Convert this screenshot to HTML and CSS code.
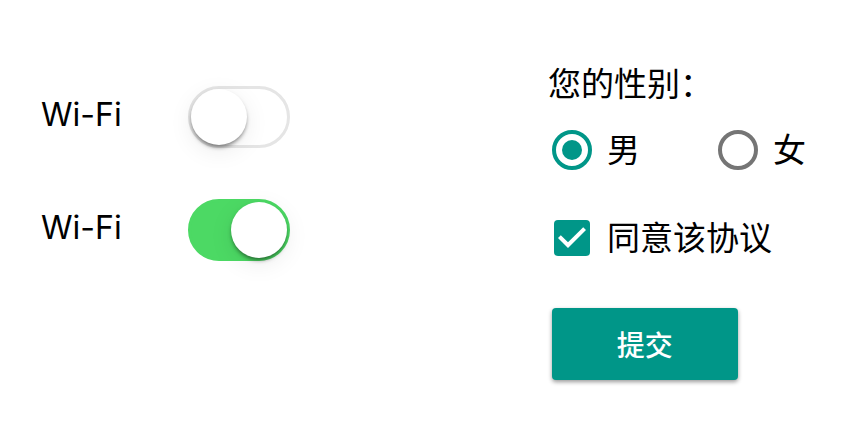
FILE: index.html
```
<!doctype html>
<html lang="zh-CN">
<head>
<meta charset="UTF-8">
<title>Form controls</title>
<meta name="viewport" content="width=device-width, initial-scale=1.0">
<link rel="stylesheet" href="styles.css">
</head>
<body>
<main class="demo">
  <section class="switches">
    <label class="switch-row">
      <span class="switch-text">Wi-Fi</span>
      <input class="switch" type="checkbox" role="switch">
    </label>
    <label class="switch-row">
      <span class="switch-text">Wi-Fi</span>
      <input class="switch" type="checkbox" role="switch" checked>
    </label>
  </section>

  <form class="form">
    <fieldset class="group">
      <legend class="title">您的性别：</legend>
      <div class="options">
        <label class="option">
          <input class="radio" type="radio" name="gender" value="male" checked>
          <span class="option-text">男</span>
        </label>
        <label class="option">
          <input class="radio" type="radio" name="gender" value="female">
          <span class="option-text">女</span>
        </label>
      </div>
    </fieldset>
    <div class="agree">
      <input class="checkbox" type="checkbox" id="agree" checked>
      <label class="option-text" for="agree">同意该协议</label>
    </div>
    <button class="submit" type="button">提交</button>
  </form>
</main>
</body>
</html>
```
FILE: styles.css
```
* { box-sizing: border-box; }
body { margin: 0; background: #fff; color: #000; font-family: "Noto Sans CJK SC", sans-serif; font-size: 33px; line-height: 36px; }
input { appearance: none; flex: none; margin: 0; cursor: pointer; }

.demo { display: grid; grid-template-columns: 5fr 3fr; padding: 64px 0 32px 41px; }

/* iOS switch */
.switches { display: flex; flex-direction: column; align-items: flex-start; gap: 51px; padding-top: 22px; }
.switch-row { display: flex; align-items: center; height: 62px; cursor: pointer; }
.switch-text { width: 147px; padding-bottom: 4px; font-family: Inter, sans-serif; font-size: 32px; }
.switch { display: flex; width: 102px; height: 62px; padding: 0; border: 3px solid #e5e5e5; border-radius: 31px; background: #fff; }
.switch::before { content: ""; width: 56px; height: 56px; border-radius: 50%; background: #fff; box-shadow: 0 3px 4px -1px rgba(0, 0, 0, 0.5), 0 6px 24px rgba(0, 0, 0, 0.08); }
.switch:checked { justify-content: flex-end; border-color: #4cd964; background: #4cd964; }

/* material form */
.form { display: flex; flex-direction: column; align-items: flex-start; }
.group { margin: 0; padding: 0; border: 0; }
.title { padding: 0; }
.options { display: flex; gap: 78px; padding: 30px 0 0 4px; }
.option { display: flex; align-items: center; gap: 15px; cursor: pointer; }
.option-text { padding-bottom: 4px; }
.radio { display: grid; place-items: center; width: 40px; height: 40px; border: 4px solid #757575; border-radius: 50%; }
.radio:checked { border-color: #009688; }
.radio:checked::before { content: ""; width: 20px; height: 20px; border-radius: 50%; background: #009688; }
.agree { display: flex; align-items: center; gap: 17px; padding: 48px 0 0 6px; }
.checkbox { width: 36px; height: 36px; border: 4px solid #757575; border-radius: 4px; }
.checkbox:checked { border: 0; background: #009688 url("data:image/svg+xml,%3Csvg xmlns='http://www.w3.org/2000/svg' viewBox='0 0 36 36'%3E%3Cpath d='M14 28L4 18L6.8 15.2L14 22.3L29.2 7.2L32 10Z' fill='white'/%3E%3C/svg%3E"); }
.submit { width: 186px; height: 72px; margin: 50px 0 0 4px; padding: 0; border: 0; border-radius: 4px; background: #009688; color: #fff; font-family: inherit; font-size: 28px; font-weight: 500; box-shadow: 0 2px 4px rgba(0, 0, 0, 0.4); cursor: pointer; }
```
